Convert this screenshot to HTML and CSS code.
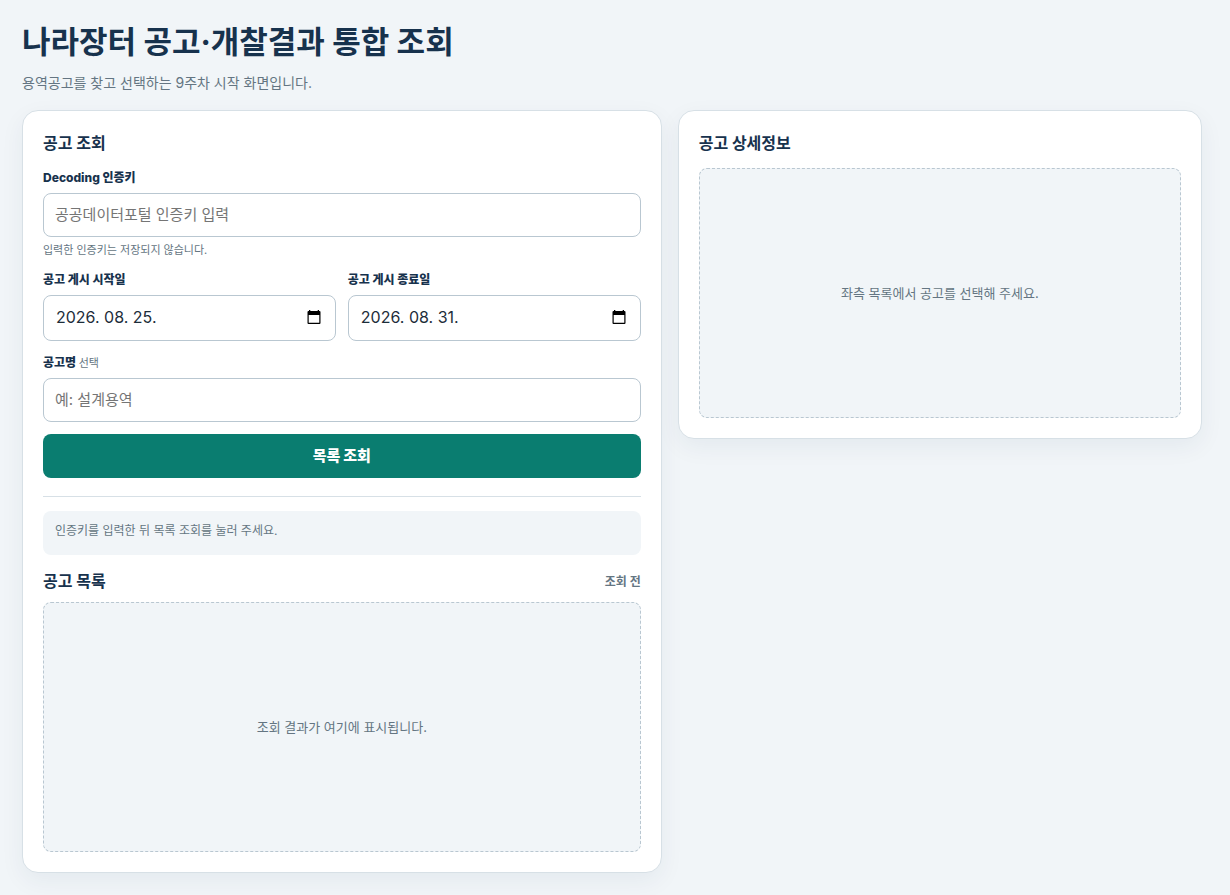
FILE: index.html
```html
<!DOCTYPE html>
<html lang="ko">
<head>
<meta charset="utf-8">
<meta name="viewport" content="width=device-width, initial-scale=1">
<title>나라장터 공고·개찰결과 통합 조회</title>
<link rel="stylesheet" href="styles.css">
</head>
<body>
<div class="page">
  <header class="page-header">
    <h1 class="title">나라장터 공고·개찰결과 통합 조회</h1>
    <p class="subtitle">용역공고를 찾고 선택하는 9주차 시작 화면입니다.</p>
  </header>
  <main class="columns">
    <section class="card">
      <h2 class="card-title">공고 조회</h2>
      <form class="search">
        <div class="field">
          <label class="label" for="key">Decoding 인증키</label>
          <input class="control" id="key" type="text" placeholder="공공데이터포털 인증키 입력">
          <small class="hint">입력한 인증키는 저장되지 않습니다.</small>
        </div>
        <div class="dates">
          <div class="field">
            <label class="label" for="start">공고 게시 시작일</label>
            <div class="date">
              <input class="date-input" id="start" type="text" value="2026. 08. 25.">
              <button class="date-button" type="button" aria-label="시작일 달력 열기">
                <svg class="calendar" viewBox="0 0 16 16"><path fill="currentColor" d="M3 1h1.300v1h7.400V1H13v1h.5a1 1 0 0 1 1 1v11a1 1 0 0 1-1 1h-11a1 1 0 0 1-1-1V3a1 1 0 0 1 1-1H3zM2.700 6v7.800h10.600V6z"/></svg>
              </button>
            </div>
          </div>
          <div class="field">
            <label class="label" for="end">공고 게시 종료일</label>
            <div class="date">
              <input class="date-input" id="end" type="text" value="2026. 08. 31.">
              <button class="date-button" type="button" aria-label="종료일 달력 열기">
                <svg class="calendar" viewBox="0 0 16 16"><path fill="currentColor" d="M3 1h1.300v1h7.400V1H13v1h.5a1 1 0 0 1 1 1v11a1 1 0 0 1-1 1h-11a1 1 0 0 1-1-1V3a1 1 0 0 1 1-1H3zM2.700 6v7.800h10.600V6z"/></svg>
              </button>
            </div>
          </div>
        </div>
        <div class="field">
          <label class="label" for="name">공고명 <span class="optional">선택</span></label>
          <input class="control" id="name" type="text" placeholder="예: 설계용역">
        </div>
        <button class="submit" type="button">목록 조회</button>
      </form>
      <div class="results">
        <p class="status">인증키를 입력한 뒤 목록 조회를 눌러 주세요.</p>
        <div class="list-head">
          <h2 class="list-title">공고 목록</h2>
          <span class="count">조회 전</span>
        </div>
        <div class="empty">조회 결과가 여기에 표시됩니다.</div>
      </div>
    </section>
    <section class="card">
      <h2 class="card-title">공고 상세정보</h2>
      <div class="empty">좌측 목록에서 공고를 선택해 주세요.</div>
    </section>
  </main>
</div>
</body>
</html>
```
FILE: styles.css
```css
* { box-sizing: border-box; }

body {
  margin: 0;
  background: #f1f5f8;
  color: #17324d;
  font-family: Inter, "Noto Sans CJK KR", sans-serif;
}

h1, h2, p { margin: 0; }

input, button { font: inherit; color: inherit; }

.page { padding: 20px 28px 22px 22px; }

.page-header {
  display: grid;
  gap: 8px;
  margin-bottom: 16px;
}

.title {
  font-size: 31px;
  line-height: 44px;
  font-weight: 700;
}

.subtitle {
  color: #647582;
  font-size: 14px;
  line-height: 22px;
}

.columns {
  display: grid;
  grid-template-columns: 1.22fr 1fr;
  gap: 16px;
  align-items: start;
}

.card {
  padding: 20px;
  border: 1px solid #d7e0e6;
  border-radius: 16px;
  background: #fff;
  box-shadow: 0 8px 24px rgba(24, 50, 78, 0.06);
}

.card-title, .list-title {
  font-size: 16px;
  line-height: 24px;
  font-weight: 700;
}

.card-title { margin-bottom: 13px; }

.search {
  display: grid;
  gap: 12px;
  padding-bottom: 18px;
  border-bottom: 1px solid #d7e0e6;
}

.field {
  display: grid;
  gap: 6px;
}

.label {
  font-size: 12px;
  line-height: 19px;
  font-weight: 800;
}

.optional {
  color: #647582;
  font-size: 11px;
  line-height: 1;
  font-weight: 400;
}

.control, .date {
  width: 100%;
  border: 1px solid #b9c7d1;
  border-radius: 8px;
  background: #fff;
}

.control {
  height: 44px;
  padding: 0 11px 2px;
  font-size: 15px;
}

.control::placeholder {
  color: #757575;
  opacity: 1;
}

.hint {
  color: #647582;
  font-size: 11px;
  line-height: 15px;
}

.dates {
  display: grid;
  grid-template-columns: 1fr 1fr;
  gap: 12px;
}

.date {
  display: flex;
  align-items: center;
  height: 46px;
  padding: 0 13px 2px 12px;
}

.date-input {
  flex: 1;
  min-width: 0;
  padding: 0;
  border: 0;
  background: none;
  color: #1d2d3a;
  font-size: 16px;
}

.date-button {
  display: flex;
  padding: 0;
  border: 0;
  background: none;
  color: #000;
}

.calendar {
  width: 16px;
  height: 16px;
}

.submit {
  height: 44px;
  padding: 0 12px 4px;
  border: 0;
  border-radius: 8px;
  background: #0a7d70;
  color: #fff;
  font-size: 15px;
  font-weight: 900;
}

.results { padding-top: 14px; }

.status {
  min-height: 44px;
  padding: 10px 12px;
  border-radius: 8px;
  background: #f1f5f8;
  color: #647582;
  font-size: 12px;
  line-height: 19px;
}

.list-head {
  display: flex;
  align-items: center;
  justify-content: space-between;
  margin: 14px 0 9px;
}

.count {
  color: #647582;
  font-size: 12px;
  line-height: 19px;
  font-weight: 700;
}

.empty {
  display: grid;
  place-items: center;
  min-height: 250px;
  padding: 20px;
  border: 1px dashed #b9c7d1;
  border-radius: 8px;
  background: #f1f5f8;
  color: #647582;
  font-size: 13px;
  line-height: 19px;
  text-align: center;
}
```
